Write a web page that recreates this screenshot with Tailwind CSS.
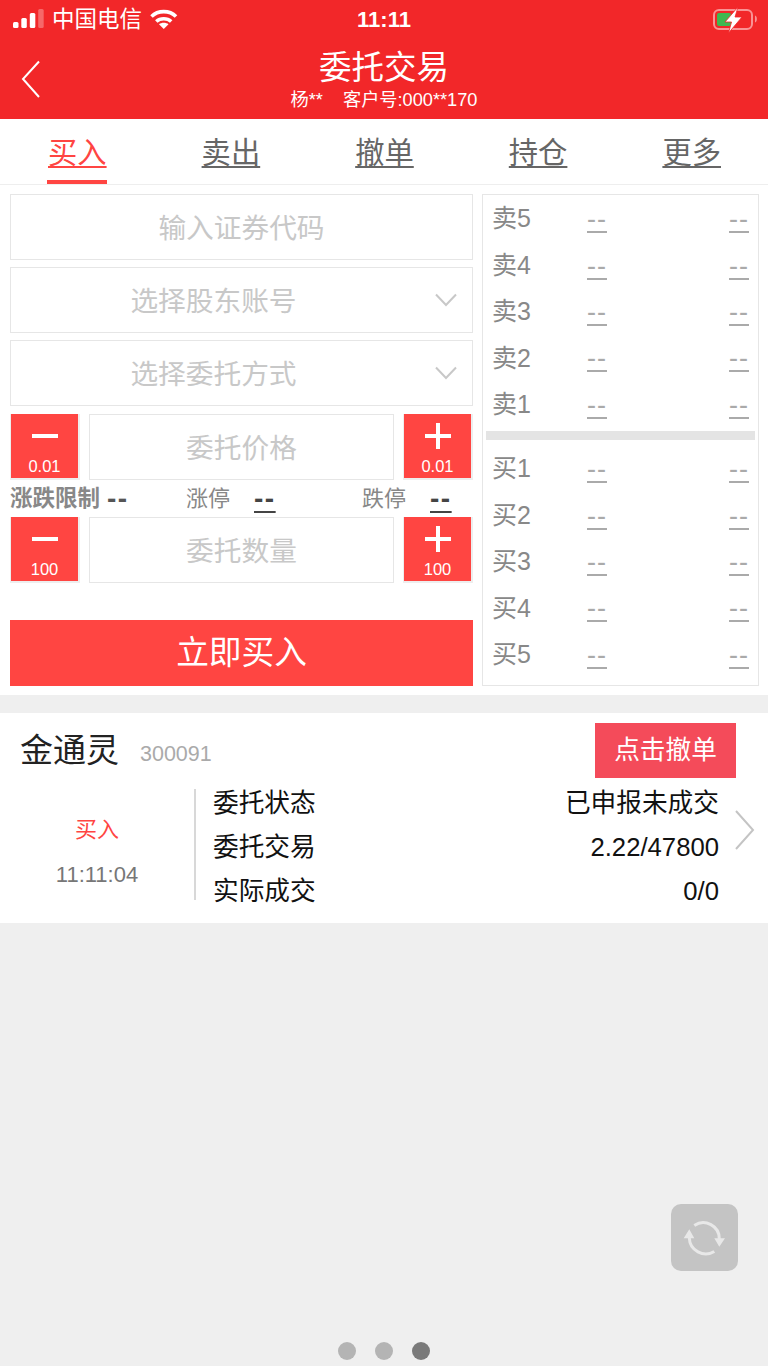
<!DOCTYPE html>
<html lang="zh-CN">
<head>
    <meta name="viewport" content="width=device-width, initial-scale=1.0">
    <meta charset="UTF-8">
    <title>委托交易</title>
    <script src="https://cdn.jsdelivr.net/npm/@tailwindcss/browser@4"></script>
</head>
<body class="bg-[#efefef] h-[1366px] w-[768px] overflow-hidden relative font-['Liberation_Sans','Noto_Sans_CJK_SC',sans-serif]">
    <!-- 状态栏 + 标题 -->
    <header class="bg-[#f22729] h-[119px] text-white">
        <div class="h-[40px] grid grid-cols-3 items-center px-[12px]">
            <div class="flex items-center whitespace-nowrap">
                <svg class="shrink-0" width="34" height="22" viewBox="0 0 34 22" fill="#fff">
                    <rect x="1" y="13" width="5.500" height="6" rx="1.500"/>
                    <rect x="9.300" y="9" width="5.500" height="10" rx="1.500"/>
                    <rect x="17.800" y="4" width="5.500" height="15" rx="1.500"/>
                    <rect x="26.200" y="0" width="5.500" height="19" rx="1.500" fill-opacity=".3"/>
                </svg>
                <span class="text-[22.500px] ml-[6px] leading-none">中国电信</span>
                <svg class="ml-[8px] shrink-0" width="28" height="22" viewBox="0 0 28 22" fill="none" stroke="#fff" stroke-width="3.600">
                    <path d="M1.500 7.500C8 1 19.500 1 26 7.500"/>
                    <path d="M6.300 12.500C10.300 8.800 17.200 8.800 21.200 12.500"/>
                    <path d="M13.750 20L9 15.300C11.500 13.300 16 13.300 18.500 15.300Z" fill="#fff" stroke="none"/>
                </svg>
            </div>
            <div class="text-center text-[22px] font-bold leading-none">11:11</div>
            <div class="flex justify-end">
                <svg class="mr-[-3px]" width="46" height="26" viewBox="0 0 46 26">
                    <rect x="1" y="3" width="38" height="19" rx="5" fill="none" stroke="#fff" stroke-opacity=".5" stroke-width="2"/>
                    <rect x="4" y="6" width="14" height="13" rx="2" fill="#3fb950"/>
                    <path d="M42 8.500c2.500.5 2.500 6.500 0 7z" fill="#fff" fill-opacity=".5"/>
                    <path d="M25 0L12 15h6.500l-3 11L29 10h-7z" fill="#fff" stroke="#f22729" stroke-width=".8"/>
                </svg>
            </div>
        </div>
        <div class="relative h-[79px] text-center">
            <svg class="absolute left-[21px] top-[20px]" width="20" height="38" viewBox="0 0 20 38" fill="none" stroke="#fff" stroke-width="2">
                <path d="M18 1.500L2 19l16 18"/>
            </svg>
            <h1 class="text-[32.500px] leading-[40px] pt-[8px]">委托交易</h1>
            <p class="text-[18.200px] leading-[22px] mt-[1px]">杨**<span class="ml-[20px]">客户号:000**170</span></p>
        </div>
    </header>

    <!-- 标签 -->
    <nav class="bg-white h-[66px] grid grid-cols-5 border-b border-[#eeeeee] text-[29.300px] text-[#666] text-center">
        <div class="relative h-[65px] pt-[2px] pl-[1px] leading-[63px]"><span class="text-[#ff4542] underline underline-offset-[3px]">买入</span><div class="absolute bottom-0 left-[47px] w-[60px] h-[4px] bg-[#ff4542]"></div></div>
        <div class="h-[65px] pt-[2px] pl-[1px] leading-[63px]"><span class="underline underline-offset-[3px]">卖出</span></div>
        <div class="h-[65px] pt-[2px] pl-[1px] leading-[63px]"><span class="underline underline-offset-[3px]">撤单</span></div>
        <div class="h-[65px] pt-[2px] pl-[1px] leading-[63px]"><span class="underline underline-offset-[3px]">持仓</span></div>
        <div class="h-[65px] pt-[2px] pl-[1px] leading-[63px]"><span class="underline underline-offset-[3px]">更多</span></div>
    </nav>

    <!-- 下单区 -->
    <section class="bg-white h-[510px] pt-[9px] pl-[10px] pr-[9px] flex gap-[9px]">
        <div class="w-[463px] flex flex-col text-[27.700px] text-[#c8c8c8] text-center">
            <div class="h-[66px] border border-[#e6e6e6] leading-[67px]">输入证券代码</div>
            <div class="relative h-[66px] mt-[7px] border border-[#e6e6e6] leading-[67px] pr-[56px]">选择股东账号
                <svg class="absolute right-[15px] top-[25px]" width="22" height="14" viewBox="0 0 22 14" fill="none" stroke="#c8c8c8" stroke-width="2"><path d="M1 1.500l10 10.500 10-10.500"/></svg>
            </div>
            <div class="relative h-[66px] mt-[7px] border border-[#e6e6e6] leading-[67px] pr-[56px]">选择委托方式
                <svg class="absolute right-[15px] top-[25px]" width="22" height="14" viewBox="0 0 22 14" fill="none" stroke="#c8c8c8" stroke-width="2"><path d="M1 1.500l10 10.500 10-10.500"/></svg>
            </div>

            <div class="flex justify-between h-[66px] mt-[8px]">
                <div class="w-[70px] border-l border-r-2 border-b-2 border-[#eeeeee]">
                    <div class="h-[64px] bg-[#ff4542] text-white flex flex-col items-center">
                        <div class="w-[26px] h-[4px] bg-white mt-[20px]"></div>
                        <div class="text-[16.500px] leading-[20px] mt-[18px]">0.01</div>
                    </div>
                </div>
                <div class="w-[305px] border border-[#e6e6e6] leading-[67px]">委托价格</div>
                <div class="w-[70px] border-l border-r-2 border-b-2 border-[#eeeeee]">
                    <div class="relative h-[64px] bg-[#ff4542] text-white flex flex-col items-center">
                        <div class="w-[26px] h-[4px] bg-white mt-[20px]"></div>
                        <div class="absolute top-[9px] w-[4px] h-[26px] bg-white"></div>
                        <div class="text-[16.500px] leading-[20px] mt-[18px]">0.01</div>
                    </div>
                </div>
            </div>

            <div class="relative h-[37px] text-[22px] leading-[38px] text-[#888]">
                <span class="absolute left-0 font-bold text-[22.500px]">涨跌限制</span>
                <span class="absolute left-[97px] font-bold text-[#555] text-[28px] tracking-[1.500px]">--</span>
                <span class="absolute left-[176px]">涨停</span>
                <span class="absolute left-[244px] font-bold text-[#444] text-[28px] tracking-[1.500px] underline underline-offset-[3px] decoration-2">--</span>
                <span class="absolute left-[352px]">跌停</span>
                <span class="absolute left-[420px] font-bold text-[#444] text-[28px] tracking-[1.500px] underline underline-offset-[3px] decoration-2">--</span>
            </div>

            <div class="flex justify-between h-[66px]">
                <div class="w-[70px] border-l border-r-2 border-b-2 border-[#eeeeee]">
                    <div class="h-[64px] bg-[#ff4542] text-white flex flex-col items-center">
                        <div class="w-[26px] h-[4px] bg-white mt-[20px]"></div>
                        <div class="text-[16.500px] leading-[20px] mt-[18px]">100</div>
                    </div>
                </div>
                <div class="w-[305px] border border-[#e6e6e6] leading-[67px]">委托数量</div>
                <div class="w-[70px] border-l border-r-2 border-b-2 border-[#eeeeee]">
                    <div class="relative h-[64px] bg-[#ff4542] text-white flex flex-col items-center">
                        <div class="w-[26px] h-[4px] bg-white mt-[20px]"></div>
                        <div class="absolute top-[9px] w-[4px] h-[26px] bg-white"></div>
                        <div class="text-[16.500px] leading-[20px] mt-[18px]">100</div>
                    </div>
                </div>
            </div>

            <button class="mt-[37px] h-[66px] bg-[#ff4542] text-white text-[32.700px]">立即买入</button>
        </div>

        <!-- 五档 -->
        <div class="w-[277px] h-[492px] border border-[#e6e6e6] text-[25px] text-[#888]">
            <div class="pt-[1px]">
                <div class="h-[46.400px] grid grid-cols-[95px_1fr_1fr] items-center px-[9px]"><span>卖5</span><span class="text-[27px] leading-[36px] tracking-[1px] text-[#aaa] underline underline-offset-[3px]">--</span><span class="text-[27px] leading-[36px] tracking-[1px] text-[#aaa] text-right underline underline-offset-[3px]">--</span></div>
                <div class="h-[46.400px] grid grid-cols-[95px_1fr_1fr] items-center px-[9px]"><span>卖4</span><span class="text-[27px] leading-[36px] tracking-[1px] text-[#aaa] underline underline-offset-[3px]">--</span><span class="text-[27px] leading-[36px] tracking-[1px] text-[#aaa] text-right underline underline-offset-[3px]">--</span></div>
                <div class="h-[46.400px] grid grid-cols-[95px_1fr_1fr] items-center px-[9px]"><span>卖3</span><span class="text-[27px] leading-[36px] tracking-[1px] text-[#aaa] underline underline-offset-[3px]">--</span><span class="text-[27px] leading-[36px] tracking-[1px] text-[#aaa] text-right underline underline-offset-[3px]">--</span></div>
                <div class="h-[46.400px] grid grid-cols-[95px_1fr_1fr] items-center px-[9px]"><span>卖2</span><span class="text-[27px] leading-[36px] tracking-[1px] text-[#aaa] underline underline-offset-[3px]">--</span><span class="text-[27px] leading-[36px] tracking-[1px] text-[#aaa] text-right underline underline-offset-[3px]">--</span></div>
                <div class="h-[46.400px] grid grid-cols-[95px_1fr_1fr] items-center px-[9px]"><span>卖1</span><span class="text-[27px] leading-[36px] tracking-[1px] text-[#aaa] underline underline-offset-[3px]">--</span><span class="text-[27px] leading-[36px] tracking-[1px] text-[#aaa] text-right underline underline-offset-[3px]">--</span></div>
            </div>
            <div class="h-[9px] mx-[3px] mt-[3px] mb-[6px] bg-[#e4e4e4]"></div>
            <div>
                <div class="h-[46.400px] grid grid-cols-[95px_1fr_1fr] items-center px-[9px]"><span>买1</span><span class="text-[27px] leading-[36px] tracking-[1px] text-[#aaa] underline underline-offset-[3px]">--</span><span class="text-[27px] leading-[36px] tracking-[1px] text-[#aaa] text-right underline underline-offset-[3px]">--</span></div>
                <div class="h-[46.400px] grid grid-cols-[95px_1fr_1fr] items-center px-[9px]"><span>买2</span><span class="text-[27px] leading-[36px] tracking-[1px] text-[#aaa] underline underline-offset-[3px]">--</span><span class="text-[27px] leading-[36px] tracking-[1px] text-[#aaa] text-right underline underline-offset-[3px]">--</span></div>
                <div class="h-[46.400px] grid grid-cols-[95px_1fr_1fr] items-center px-[9px]"><span>买3</span><span class="text-[27px] leading-[36px] tracking-[1px] text-[#aaa] underline underline-offset-[3px]">--</span><span class="text-[27px] leading-[36px] tracking-[1px] text-[#aaa] text-right underline underline-offset-[3px]">--</span></div>
                <div class="h-[46.400px] grid grid-cols-[95px_1fr_1fr] items-center px-[9px]"><span>买4</span><span class="text-[27px] leading-[36px] tracking-[1px] text-[#aaa] underline underline-offset-[3px]">--</span><span class="text-[27px] leading-[36px] tracking-[1px] text-[#aaa] text-right underline underline-offset-[3px]">--</span></div>
                <div class="h-[46.400px] grid grid-cols-[95px_1fr_1fr] items-center px-[9px]"><span>买5</span><span class="text-[27px] leading-[36px] tracking-[1px] text-[#aaa] underline underline-offset-[3px]">--</span><span class="text-[27px] leading-[36px] tracking-[1px] text-[#aaa] text-right underline underline-offset-[3px]">--</span></div>
            </div>
        </div>
    </section>

    <!-- 委托记录 -->
    <section class="bg-white h-[210px] mt-[18px] relative">
        <div class="h-[76px] flex items-center pl-[20px] pr-[32px]">
            <span class="text-[33px] text-[#222]">金通灵</span>
            <span class="text-[21.500px] text-[#aaa] ml-[21px] mt-[6px]">300091</span>
            <button class="ml-auto w-[141px] h-[55px] mt-[-2px] bg-[#f44b5a] text-white text-[25.700px]">点击撤单</button>
        </div>
        <div class="flex">
            <div class="w-[196px] h-[111px] border-r-2 border-[#d8d8d8] text-center text-[22px]">
                <div class="text-[#ff4542] pt-[27px] leading-[28px]">买入</div>
                <div class="text-[#777] mt-[17px] leading-[28px]">11:11:04</div>
            </div>
            <div class="pl-[17px] w-[523px] text-[25.700px] text-[#111] leading-[44px] mt-[-8px]">
                <div class="flex justify-between"><span>委托状态</span><span>已申报未成交</span></div>
                <div class="flex justify-between"><span>委托交易</span><span>2.22/47800</span></div>
                <div class="flex justify-between"><span>实际成交</span><span>0/0</span></div>
            </div>
        </div>
        <svg class="absolute left-[735px] top-[97px]" width="20" height="40" viewBox="0 0 20 40" fill="none" stroke="#c4c4c4" stroke-width="2"><path d="M1 1l17 19L1 39"/></svg>
    </section>

    <!-- 刷新 -->
    <div class="absolute left-[671px] top-[1204px] w-[67px] h-[67px] rounded-[10px] bg-[#c4c4c4]">
        <svg width="67" height="67" viewBox="0 0 67 67" fill="none" stroke="#e8e8e8" stroke-width="3">
            <path d="M23.300 21.500A16 16 0 0 1 48.300 35"/>
            <path d="M18.300 34A16.500 16.500 0 0 0 43.300 47.500"/>
            <path d="M12.700 34.300h10.600l-5-9zM43.300 34.300H54l-5.700 8.400z" fill="#e8e8e8" stroke="none"/>
        </svg>
    </div>

    <!-- 分页点 -->
    <div class="absolute top-[1342px] left-[338px] flex gap-[19px]">
        <div class="w-[18px] h-[18px] rounded-full bg-[#b4b4b4]"></div>
        <div class="w-[18px] h-[18px] rounded-full bg-[#b4b4b4]"></div>
        <div class="w-[18px] h-[18px] rounded-full bg-[#7a7a7a]"></div>
    </div>
</body>
</html>
